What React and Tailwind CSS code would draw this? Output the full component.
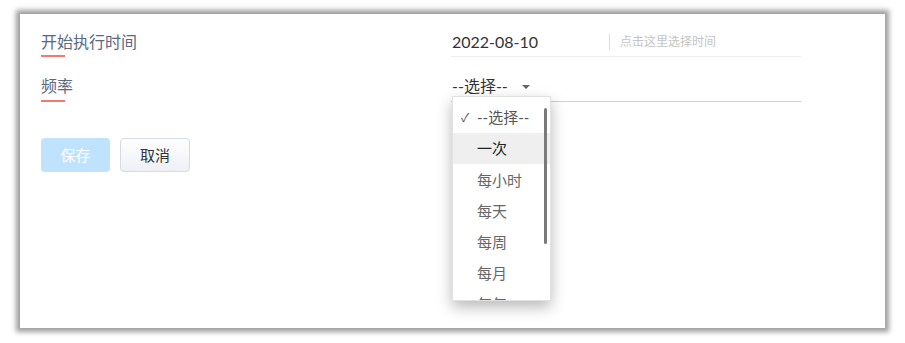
import React from "react";

const font = { fontFamily: "Lato, 'Noto Sans CJK SC', sans-serif" };

export default function App() {
  const items = ["一次", "每小时", "每天", "每周", "每月", "每年"];
  return (
    <div className="w-[905px] h-[343px] bg-white pt-[14px] pl-[20px] overflow-hidden" style={font}>
      <div className="w-[865px] h-[314px] bg-white shadow-[0_0_5px_4px_rgba(0,0,0,0.38)] pl-[21px] pt-[16px]">
        {/* Row 1 */}
        <div className="flex items-start">
          <div className="w-[410px]">
            <div className="text-[16px] leading-[24px] text-[#5a6882]">开始执行时间</div>
            <div className="mt-[1px] w-[24px] h-[2px] bg-[#f27a72]"></div>
          </div>
          <div className="w-[350px] border-b border-[#eeeeee] pb-[2px] flex items-center">
            <div className="w-[158px] pl-[1px] text-[16px] leading-[24px] text-[#333]">2022-08-10</div>
            <div className="w-px h-[16px] bg-[#dddddd]"></div>
            <div className="pl-[10px] text-[12px] leading-[24px] text-[#c4c4c4]">点击这里选择时间</div>
          </div>
        </div>
        {/* Row 2 */}
        <div className="flex items-start mt-[17px]">
          <div className="w-[410px]">
            <div className="text-[16px] leading-[24px] text-[#5a6882]">频率</div>
            <div className="mt-[2px] w-[24px] h-[2px] bg-[#f27a72]"></div>
          </div>
          <div className="relative w-[350px] border-b border-[#a9def4] pb-[3px]">
            <div className="flex items-center pl-[1px] text-[16px] leading-[24px] text-[#333]">
              <span>--选择--</span>
              <span className="ml-[14px] w-0 h-0 border-l-[4px] border-r-[4px] border-t-[4px] border-l-transparent border-r-transparent border-t-[#666] mt-[1px]"></span>
            </div>
            <div className="absolute left-[1px] top-[22px] w-[99px] h-[205px] bg-white border border-[#e2e2e2] shadow-[0_6px_14px_rgba(0,0,0,0.28)] overflow-hidden pt-[5px] z-10">
              <div className="h-[31px] flex items-center text-[15px] text-[#555]">
                <span className="w-[24px] pl-[8px] text-[12px] text-[#555]">✓</span>
                <span>--选择--</span>
              </div>
              {items.map((t, i) => (
                <div
                  key={t}
                  className={
                    i === 0
                      ? "h-[31px] flex items-center pl-[24px] text-[15px] text-[#222] bg-[#efefef]"
                      : "h-[31px] flex items-center pl-[24px] pt-[2px] text-[15px] text-[#666]"
                  }
                >
                  {t}
                </div>
              ))}
              <div className="absolute right-[3px] top-[11px] w-[3px] h-[136px] rounded-full bg-[#7a7a7a]"></div>
            </div>
          </div>
        </div>
        {/* Buttons */}
        <div className="flex gap-[10px] mt-[36px]">
          <button className="w-[69px] h-[34px] rounded-[4px] bg-[#bfe3fd] text-white text-[15px]">保存</button>
          <button className="w-[70px] h-[34px] rounded-[4px] border border-[#d5dae4] bg-gradient-to-b from-white to-[#eef0f6] text-[#333] text-[15px]">取消</button>
        </div>
      </div>
    </div>
  );
}
